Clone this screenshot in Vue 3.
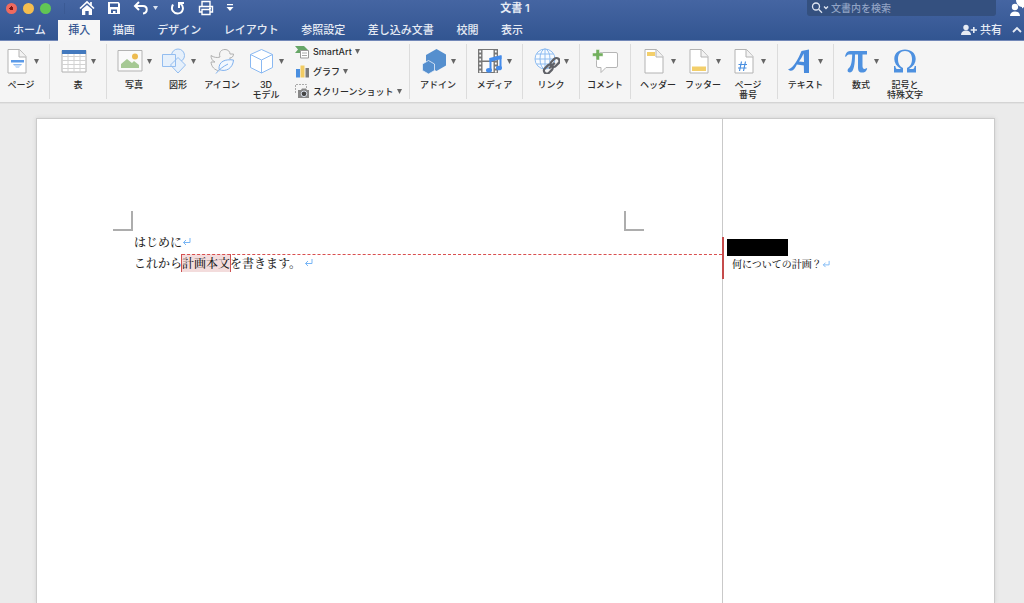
<script setup>
const tabs = ['ホーム', '挿入', '描画', 'デザイン', 'レイアウト', '参照設定', '差し込み文書', '校閲', '表示']
const active = '挿入'
const groups = [
  { id: 'page', items: [{ icon: 'page', label: 'ページ', menu: true }] },
  { id: 'table', items: [{ icon: 'table', label: '表', menu: true }] },
  {
    id: 'figure',
    items: [
      { icon: 'photo', label: '写真', menu: true },
      { icon: 'shapes', label: '図形', menu: true },
      { icon: 'duck', label: 'アイコン' },
      { icon: 'cube', label: '3D\nモデル', menu: true }
    ],
    rows: [
      { icon: 'smartart', label: 'SmartArt' },
      { icon: 'chart', label: 'グラフ' },
      { icon: 'camera', label: 'スクリーンショット' }
    ]
  },
  { id: 'addin', items: [{ icon: 'addin', label: 'アドイン', menu: true }] },
  { id: 'media', items: [{ icon: 'media', label: 'メディア', menu: true }] },
  { id: 'link', items: [{ icon: 'link', label: 'リンク', menu: true }] },
  { id: 'comment', items: [{ icon: 'comment', label: 'コメント' }] },
  {
    id: 'header',
    items: [
      { icon: 'header', label: 'ヘッダー', menu: true },
      { icon: 'footer', label: 'フッター', menu: true },
      { icon: 'number', label: 'ページ\n番号', menu: true }
    ]
  },
  { id: 'text', items: [{ icon: 'text', label: 'テキスト', menu: true }] },
  {
    id: 'symbol',
    items: [
      { icon: 'pi', label: '数式', menu: true },
      { icon: 'omega', label: '記号と\n特殊文字' }
    ]
  }
]
</script>

<template>
  <div class="app">
    <header class="top">
      <div class="titlebar">
        <div class="left">
          <div class="lights">
            <button class="light red" aria-label="閉じる"></button>
            <button class="light yellow" aria-label="しまう"></button>
            <button class="light green" aria-label="拡大"></button>
          </div>
          <div class="quick">
            <button aria-label="ホーム画面">
              <svg width="16" height="16" viewBox="0 0 16 16" fill="none" stroke="#fff" stroke-width="1.7"><path d="M1 8.500 8 2l7 6.500M12 2v3.500" /><path d="M3 9.300 8 4.900l5 4.400V15H9.700v-4H6.300v4H3z" fill="#fff" stroke="none" /></svg>
            </button>
            <button aria-label="保存">
              <svg width="14" height="16" viewBox="0 0 14 16"><path d="M1 2h10.500L13 3.500V14H1z" fill="#fff" /><path d="M3 3.500h8V7H3zM4 9.500h6V13H8.500v-2H6v2H4z" fill="#3c5e9b" /></svg>
            </button>
            <button class="undo" aria-label="元に戻す">
              <svg width="16" height="16" viewBox="0 0 16 16" fill="none" stroke="#fff" stroke-width="2"><path d="M6 2 2 6l4 4M2.500 6H10c5 0 5 7 0 7.500" /></svg>
              <svg width="5" height="4" viewBox="0 0 5 4"><path d="M0 0h5L2.500 4z" fill="#dbe3f0" /></svg>
            </button>
            <button aria-label="繰り返し">
              <svg width="16" height="16" viewBox="0 0 16 16" fill="none" stroke="#fff" stroke-width="2"><path d="M3 4.500C0 10 4 13.500 7.500 13.500c6 0 7-7 3-10M9 8V3h5" /></svg>
            </button>
            <button aria-label="印刷">
              <svg width="16" height="16" viewBox="0 0 16 16" fill="none" stroke="#fff" stroke-width="1.400"><path d="M4 6V1.500h8V6M4 12H1.500V6.500h13V12H12M4 9.500h8v5H4zM11 8.200h2" /></svg>
            </button>
            <button aria-label="カスタマイズ">
              <svg width="8" height="8" viewBox="0 0 8 8" fill="#fff"><path d="M1 0h6v1.200H1zM.5 3h7L4 7z" /></svg>
            </button>
          </div>
        </div>
        <h1>文書 1</h1>
        <div class="right">
          <label class="search">
            <svg width="19" height="12" viewBox="0 0 19 12" fill="none" stroke="#dfe6f2" stroke-width="1.300"><circle cx="5" cy="4.500" r="3.500" /><path d="m7.600 7.200 3.400 3.600M13 4.500l2 2 2-2" /></svg>
            <input type="search" placeholder="文書内を検索" aria-label="文書内を検索" />
          </label>
          <button class="user" aria-label="アカウント">
            <svg width="15" height="17" viewBox="0 0 15 17" fill="#fff"><circle cx="6" cy="7" r="3.200" /><path d="M1 16c0-3 2-4.500 5-4.500s5 1.500 5 4.500zM7 0h8v7l-2 1.500V7C10 7 7 4 7 0z" /></svg>
          </button>
        </div>
      </div>
      <div class="tabrow">
        <nav class="tabs">
          <button v-for="t in tabs" :key="t" class="tab" :class="{ on: t === active }">{{ t }}</button>
        </nav>
        <div class="share">
          <button>
            <svg width="16" height="12" viewBox="0 0 16 12" fill="#e6ebf4"><circle cx="5" cy="3.500" r="2.700" /><path d="M0 11c0-3 2-4.500 5-4.500S10 8 10 11zM12 3h1.600v2.200H16v1.600h-2.400V9H12V6.800H9.700V5.200H12z" /></svg>
            共有
          </button>
          <button aria-label="リボンを閉じる">
            <svg width="10" height="8" viewBox="0 0 10 8" fill="none" stroke="#e6ebf4" stroke-width="1.800"><path d="m1 6 4-4 4 4" /></svg>
          </button>
        </div>
      </div>
    </header>

    <div class="ribbon">
      <section v-for="g in groups" :key="g.id" class="group" :class="g.id">
        <button v-for="i in g.items" :key="i.icon" class="tool">
          <span class="face">
            <svg width="26" height="26" viewBox="0 0 26 26" fill="none">
              <g v-if="['page', 'header', 'footer', 'number'].includes(i.icon)">
                <path d="M4 1.500h11.500l6.500 7V25H4z" fill="#fff" stroke="#b3b3b3" />
                <path d="M15 1.500V9h7" fill="#f3f3f3" stroke="#b3b3b3" />
                <path v-if="i.icon === 'page'" d="M7 12h13v2.500H7z" fill="#5b9ae8" />
                <path v-if="i.icon === 'page'" d="M9 16h9l-1 1.500h-7zM11 18.500h5l-1 1h-3z" fill="#8dbaf0" />
                <path v-if="i.icon === 'header'" d="M6 4h8v4H6z" fill="#f3cf6b" />
                <path v-if="i.icon === 'footer'" d="M6 18.500h14v4.500H6z" fill="#f3cf6b" />
                <path v-if="i.icon === 'number'" d="M10.500 13.500 8.500 23M14.500 13.500l-2 9.500M7.500 16.500h8.500M7 20h8.500" stroke="#4a8fe0" stroke-width="1.200" />
              </g>
              <g v-else-if="i.icon === 'table'">
                <path d="M1 2.500h24V24H1z" fill="#fff" stroke="#b0b0b0" />
                <path d="M1 8.500h24M1 12.500h24M1 16.500h24M1 20.500h24M7 6v18M13 6v18M19 6v18" stroke="#d2d2d2" />
                <path d="M1 2h24v4H1z" fill="#4379be" />
              </g>
              <g v-else-if="i.icon === 'photo'">
                <path d="M1 2.500h24V23H1z" fill="#fafafa" stroke="#b3b3b3" />
                <path d="M4 20v-4l6-5 5 4 2-2 5 4v3z" fill="#a6c994" />
                <circle cx="18" cy="8.500" r="3" fill="#edbb4f" />
              </g>
              <g v-else-if="i.icon === 'shapes'" fill="#e6f0fb" stroke="#93bdf0">
                <circle cx="17" cy="7.500" r="6.500" />
                <path d="M1.500 6.500h13v12h-13zM17 9.500l7.500 7.500-7.500 8-7.500-8z" />
              </g>
              <g v-else-if="i.icon === 'duck'">
                <path d="M2 7.500c3 2 6 2.500 9 1.500C9.500 4.500 12 1.500 16 1.500c3 0 5 2 5 4.500h3.500c0 2.500-1.500 4-4 4 1 1 1.500 2 1.500 3M2 7.500c0 3 1.500 5.500 4 6.500H2c.5 5 3.500 8 8.500 9" stroke="#b0b0b0" />
                <path d="M24.500 12c-8-1-15 1-14.500 9.500C17 24.500 24 20 24.500 12zM7 25.500c3-4 7-7 12-9.500" fill="#f3f8fe" stroke="#7fb1ef" />
              </g>
              <g v-else-if="i.icon === 'cube'" stroke="#8ab9f2">
                <path d="m12.500 1.500 11 5v13l-11 5.500-11-5.500v-13z" fill="#fff" />
                <path d="m1.500 6.500 11 5.500 11-5.500M12.500 12v13" />
              </g>
              <g v-else-if="i.icon === 'addin'" fill="#558fce">
                <path d="m15.500 1 9.500 5.500v11L15.500 23 5 17V7z" />
                <path d="m7.500 12.500 6 3.500v6.500l-6 3.500-6-3.500V16z" stroke="#e8f0fa" stroke-width=".8" />
              </g>
              <g v-else-if="i.icon === 'media'">
                <path d="M1 1h20v24H1z" fill="#777" />
                <path d="M5.500 2h11v10.500h-11zM5.500 14h11v10h-11z" fill="#fafafa" />
                <path d="M3.200 2.500v22M18.800 2.500v22" stroke="#fff" stroke-width="1.800" stroke-dasharray="2 2" />
                <path d="M12.500 10 24.500 7v4l-12 3z" fill="#448bea" />
                <path d="M13.500 10v12M23.500 8v12" stroke="#448bea" stroke-width="2" />
                <ellipse cx="12" cy="22.300" rx="3" ry="2.300" fill="#448bea" /><ellipse cx="22" cy="20" rx="3" ry="2.300" fill="#448bea" />
              </g>
              <g v-else-if="i.icon === 'link'">
                <g stroke="#8ebcf1" fill="#f7fbff"><circle cx="11" cy="11" r="10" /><ellipse cx="11" cy="11" rx="5" ry="10" /><path d="M11 1v20M1 11h20M2.500 6h17M2.500 16h17" /></g>
                <g transform="rotate(-45 17.500 18)" stroke="#606268" stroke-width="2.300"><rect x="8" y="15" width="10" height="6" rx="3" /><rect x="17.500" y="15" width="10" height="6" rx="3" /><path d="M14 18h8" /></g>
              </g>
              <g v-else-if="i.icon === 'comment'">
                <path d="M5 4.500h19q1.500 0 1.500 1.500v12q0 1.500-1.500 1.500H14l-5 5v-5H6q-1.500 0-1.500-1.500V6z" fill="#fff" stroke="#b5b5b5" />
                <path d="M4 1.500h3.500V5H11v3.300H7.500V12H4V8.300H.5V5H4z" fill="#72af5d" stroke="#f5f5f5" stroke-width=".5" />
              </g>
              <path v-else-if="i.icon === 'text'" d="M0 21.500C6 20 10.500 10 13.500 3L21 1.500V25h-5l-.2-7.500-7-1C7 20.500 4.500 25 0 21.500zm11-8 5 .5-.3-8.500q-2 4.500-4.700 8z" fill="#488bdd" />
              <path v-else-if="i.icon === 'pi'" d="M1 8.500C2 4 4 3 7 3h16v3.500h-4.500V18c0 3 2 4 4 2l.7.700C22 24 20 24.500 18 24.500c-3 0-4-2-4-5v-13h-3C11 15 10 24.500 6 24.500c-3 0-3-3-1-4.500C7.500 18 8 12 8.200 6.500H6c-2 0-3 .5-4 2.300z" fill="#4e91e0" />
              <path v-else-if="i.icon === 'omega'" d="M2 24.500V18h1.300c.4 2.500 1 3 2.500 3H9C4.500 18 2.300 15 2.300 11 2.300 5 7 1.500 13 1.500S23.700 5 23.700 11c0 4-2.200 7-6.700 10h3.200c1.500 0 2.100-.5 2.500-3H24v6.500h-9V20c3.500-1.500 5-5 5-9 0-5-2.500-8-7-8s-7 3-7 8c0 4 1.500 7.500 5 9v4.500z" fill="#4e91e0" />
            </svg>
            <svg v-if="i.menu" class="caret" width="5" height="5" viewBox="0 0 5 5"><path d="M0 0h5L2.500 5z" fill="#666" /></svg>
          </span>
          <span class="name">{{ i.label }}</span>
        </button>
        <div v-if="g.rows" class="rows">
          <button v-for="r in g.rows" :key="r.icon" class="small">
            <svg width="15" height="15" viewBox="0 0 15 15" fill="none">
              <g v-if="r.icon === 'smartart'">
                <path d="M0 2h9l4 4-4 3H0l3-3.500z" fill="#67a667" /><path d="M5.500 6.500h8V14h-8z" fill="#fff" stroke="#999" /><path d="M7 9h5M7 11.500h5" stroke="#aaa" />
              </g>
              <g v-else-if="r.icon === 'chart'"><path d="M1 5h4v8.500H1z" fill="#4a8fe0" /><path d="M5.500 1.500h4v12h-4z" fill="#f2cc63" /><path d="M10.500 4h3.500v9.500h-3.500z" fill="#7c7c7c" /></g>
              <g v-else>
                <path d="M.5 9V.5h11V4" stroke="#aaa" stroke-dasharray="2 1" /><path d="M3 6h3l1-1.500h4L12 6h2v8H3z" fill="#888" /><circle cx="9" cy="9.800" r="2.800" fill="#444" stroke="#dbe2ee" />
              </g>
            </svg>
            <span>{{ r.label }}</span>
            <svg width="5" height="5" viewBox="0 0 5 5"><path d="M0 0h5L2.500 5z" fill="#666" /></svg>
          </button>
        </div>
      </section>
    </div>

    <main class="workspace">
      <article class="sheet">
        <div class="body">
          <div class="marks"><i class="mark start"></i><i class="mark end"></i></div>
          <div class="copy">
            <p>はじめに<svg class="ret" width="9" height="9" viewBox="0 0 9 9"><path d="M8 1v4.500H1.500M4 3 1.500 5.500 4 8" /></svg></p>
            <p>これから<mark>計画本文</mark>を書きます。<svg class="ret gap" width="9" height="9" viewBox="0 0 9 9"><path d="M8 1v4.500H1.500M4 3 1.500 5.500 4 8" /></svg></p>
          </div>
          <div class="lead"></div>
        </div>
        <aside class="notes">
          <div class="note">
            <div class="author"></div>
            <p>何についての計画？<svg class="ret" width="8" height="8" viewBox="0 0 9 9"><path d="M8 1v4.500H1.500M4 3 1.500 5.500 4 8" /></svg></p>
          </div>
        </aside>
      </article>
    </main>
  </div>
</template>

<style>
body { margin: 0; }
</style>

<style scoped>
* { box-sizing: border-box; }
.app { min-height: 100vh; display: flex; flex-direction: column; overflow: hidden; background: #ebebeb; font-family: Inter, "Noto Sans CJK JP", sans-serif; }
button { border: 0; padding: 0; margin: 0; background: none; color: inherit; font: inherit; }
svg { display: block; flex: none; }
.top { background: linear-gradient(#4565a2, #325591); color: #e6ebf4; border-bottom: 1px solid #7288b8; }
.titlebar { height: 20px; display: grid; grid-template-columns: 1fr auto 1fr; padding-left: 6px; }
.left, .lights, .quick, .quick button, .right { display: flex; align-items: center; }
.left { height: 16px; }
.lights { gap: 6px; padding-right: 13px; border-right: 1px solid #3b5a94; }
.light { width: 11px; height: 11px; border-radius: 50%; }
.red { background: radial-gradient(circle, #7c1512 0 2px, #ee6a5f 2px); }
.yellow { background: #f5be4f; }
.green { background: #61c654; }
.quick { gap: 12px; margin-left: 14px; }
.quick .undo { gap: 4px; }
h1 { margin: 0; font-size: 11px; line-height: 16px; font-weight: 600; }
.right { justify-content: flex-end; align-items: flex-start; gap: 13px; }
.search { flex: 0 1 189px; height: 16px; display: flex; align-items: center; gap: 1px; padding-left: 4px; border-radius: 0 0 3px 3px; background: #34507f; }
.search input { flex: 1; min-width: 0; height: 16px; border: 0; padding: 0; outline: 0; background: none; font: 500 10px/16px Inter, "Noto Sans CJK JP", sans-serif; color: #fff; }
.search input::placeholder { color: #91a3c4; opacity: 1; }
.tabrow { display: flex; justify-content: space-between; height: 20px; }
.tabs { display: flex; justify-content: space-between; flex: 0 1 530px; margin-left: 3px; }
.tab { padding: 0 10px; font-size: 11px; line-height: 18px; font-weight: 500; white-space: nowrap; }
.tab.on { background: #f6f6f6; color: #365893; box-shadow: 0 1px #f6f6f6; }
.share { display: flex; gap: 10px; padding-right: 2px; font-size: 11px; line-height: 18px; font-weight: 500; }
.share button { display: flex; align-items: center; gap: 3px; white-space: nowrap; }
.ribbon { display: flex; height: 62px; padding: 3px 0; background: #f5f5f5; border-bottom: 1px solid #d4d4d4; }
.group { display: flex; justify-content: center; flex: none; width: 57px; border-right: 1px solid #dcdcdc; }
.group.page { width: 50px; padding-right: 7px; }
.group.figure { width: 303px; justify-content: flex-start; padding-left: 5px; }
.group.media, .group.text { width: 56px; }
.group.comment { width: 51px; }
.group.header { width: 147px; justify-content: flex-start; padding-left: 5px; gap: 1px; }
.group.symbol { width: auto; border: 0; padding-left: 5px; }
.tool { width: 44px; flex: none; display: flex; flex-direction: column; align-items: center; padding-top: 4px; color: #2b2b2b; }
.face { display: flex; align-items: center; gap: 4px; }
.name { margin-top: 6px; font-size: 9px; line-height: 10px; font-weight: 500; white-space: pre; text-align: center; }
.rows { display: flex; flex-direction: column; margin-top: -3px; margin-left: 7px; }
.small { height: 20px; flex: none; display: flex; align-items: center; gap: 3px; font-size: 9px; font-weight: 500; color: #2b2b2b; white-space: nowrap; }
.workspace { flex: 1; display: flex; padding: 14px 29px 0 36px; border-top: 1px solid #e2e2e2; }
.sheet { flex: 1; display: flex; background: #fff; border: 1px solid #cbcbcb; border-bottom: 0; box-shadow: 0 0 4px #d0d0d0; font-family: "Noto Serif CJK JP", "Noto Sans CJK JP", serif; color: #1c1c1c; }
.body { flex: 1; position: relative; padding-top: 92px; }
.marks { display: flex; justify-content: space-between; padding: 0 78px 0 76px; }
.mark { width: 20px; height: 20px; border-bottom: 2px solid #adadad; }
.start { border-right: 2px solid #adadad; }
.end { border-left: 2px solid #adadad; }
.copy { padding-left: 97px; }
p { margin: 0; display: flex; align-items: center; }
.copy p { font-size: 12px; line-height: 21px; font-weight: 500; }
mark { background: #f3dcdc; color: inherit; line-height: 18px; box-shadow: -1px 0 #cf5252, 1px 0 #cf5252; }
.ret { fill: none; stroke: #77b5f5; }
.gap { margin-left: 3px; }
.lead { position: absolute; top: 135px; left: 145px; right: 0; border-top: 1px dashed #d94f4f; }
.notes { width: 272px; border-left: 1px solid #c9c9c9; padding-top: 118px; }
.note { height: 42px; margin-left: -1px; border-left: 2px solid #c54b4b; padding: 2px 0 0 3px; }
.author { width: 61px; height: 17px; background: #000; }
.note p { font-size: 10px; line-height: 16px; padding-left: 5px; font-weight: 500; }
</style>
